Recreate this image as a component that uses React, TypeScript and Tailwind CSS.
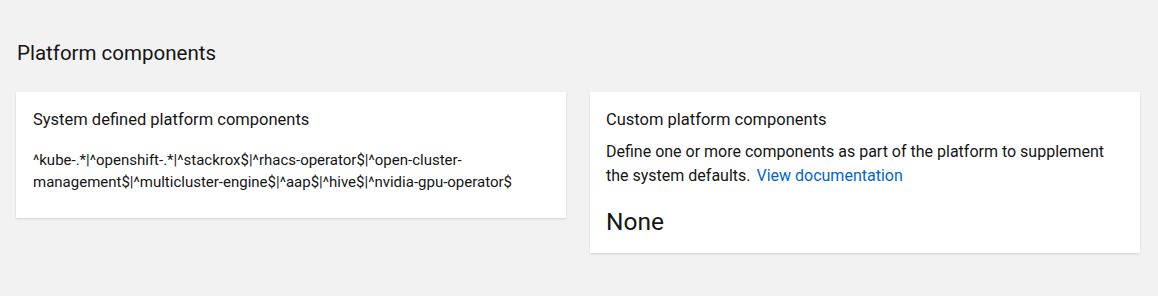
export default function App() {
  return (
    <div className="min-h-[296px] bg-[#f2f2f2] text-[#151515] px-4 pt-[39px] pb-6" style={{ fontFamily: "Roboto, 'Noto Sans', sans-serif" }}>
      <h2 className="pl-px text-[20.5px] leading-[28px] font-normal">Platform components</h2>
      <div className="mt-[25px] grid grid-cols-2 gap-6 items-start pr-[2px]">
        <section className="bg-white shadow-[0_1px_2px_rgba(0,0,0,0.12)] px-[17px] pt-4 pb-[25px]">
          <h3 className="text-[16.5px] leading-[24px] font-normal">System defined platform components</h3>
          <p className="mt-[17px] text-[15px] leading-[22px] pr-4">
            ^kube-.*|^openshift-.*|^stackrox$|^rhacs-operator$|^open-cluster-management$|^multicluster-engine$|^aap$|^hive$|^nvidia-gpu-operator$
          </p>
        </section>
        <section className="bg-white shadow-[0_1px_2px_rgba(0,0,0,0.12)] px-4 pt-4 pb-[15px]">
          <h3 className="text-[16.5px] leading-[24px] font-normal">Custom platform components</h3>
          <p className="mt-2 text-[16px] leading-[24px]">
            Define one or more components as part of the platform to supplement the system defaults.{" "}
            <a href="#" className="ml-0.5 text-[#0066cc]">View documentation</a>
          </p>
          <p className="mt-[18px] text-[24.5px] leading-[32px]">None</p>
        </section>
      </div>
    </div>
  );
}
